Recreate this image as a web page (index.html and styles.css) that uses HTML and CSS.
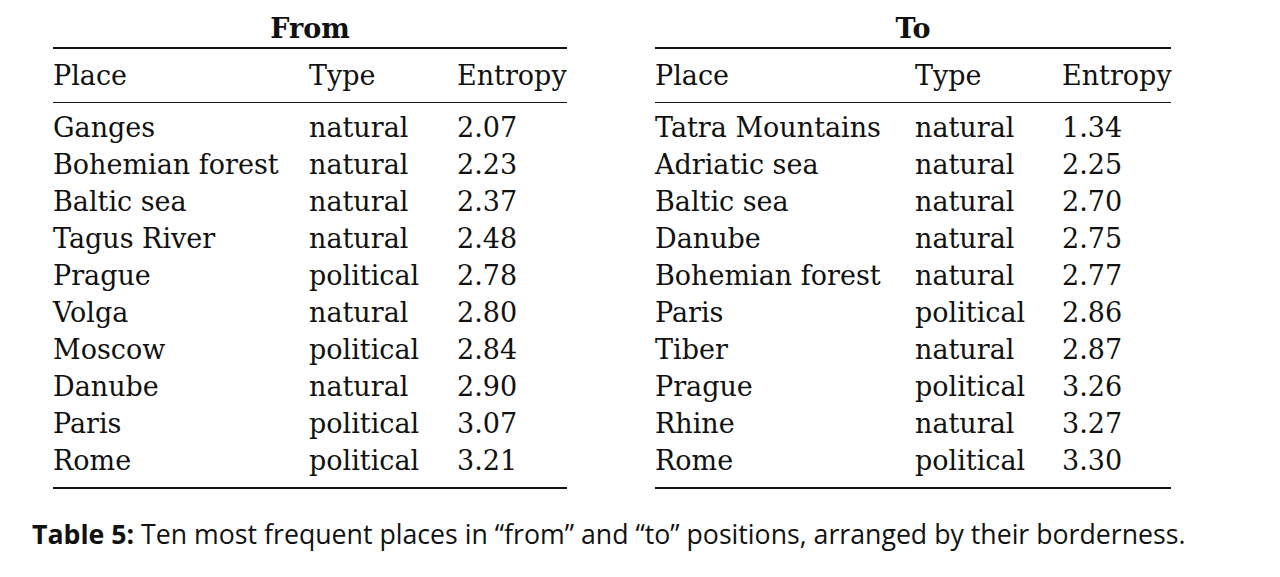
FILE: index.html
```html
<!DOCTYPE html>
<html>
<head>
<meta charset="utf-8">
<link rel="stylesheet" href="styles.css">
</head>
<body>
<div class="page">
  <div class="tables">
    <div class="tbl from">
      <div class="title">From</div>
      <div class="head">
        <span>Place</span><span>Type</span><span>Entropy</span>
      </div>
      <div class="body">
        <span>Ganges</span><span>natural</span><span>2.07</span>
        <span>Bohemian forest</span><span>natural</span><span>2.23</span>
        <span>Baltic sea</span><span>natural</span><span>2.37</span>
        <span>Tagus River</span><span>natural</span><span>2.48</span>
        <span>Prague</span><span>political</span><span>2.78</span>
        <span>Volga</span><span>natural</span><span>2.80</span>
        <span>Moscow</span><span>political</span><span>2.84</span>
        <span>Danube</span><span>natural</span><span>2.90</span>
        <span>Paris</span><span>political</span><span>3.07</span>
        <span>Rome</span><span>political</span><span>3.21</span>
      </div>
    </div>
    <div class="tbl to">
      <div class="title">To</div>
      <div class="head">
        <span>Place</span><span>Type</span><span>Entropy</span>
      </div>
      <div class="body">
        <span>Tatra Mountains</span><span>natural</span><span>1.34</span>
        <span>Adriatic sea</span><span>natural</span><span>2.25</span>
        <span>Baltic sea</span><span>natural</span><span>2.70</span>
        <span>Danube</span><span>natural</span><span>2.75</span>
        <span>Bohemian forest</span><span>natural</span><span>2.77</span>
        <span>Paris</span><span>political</span><span>2.86</span>
        <span>Tiber</span><span>natural</span><span>2.87</span>
        <span>Prague</span><span>political</span><span>3.26</span>
        <span>Rhine</span><span>natural</span><span>3.27</span>
        <span>Rome</span><span>political</span><span>3.30</span>
      </div>
    </div>
  </div>
  <p class="caption"><b>Table 5:</b> Ten most frequent places in “from” and “to” positions, arranged by their borderness.</p>
</div>
</body>
</html>
```

FILE: styles.css
```css
html, body {
  margin: 0;
  background: #ffffff;
  color: #111111;
}

.page {
  width: 1280px;
  height: 577px;
  padding-top: 10px;
  box-sizing: border-box;
}

.tables {
  display: flex;
  gap: 88px;
  padding-left: 53px;
  font-family: "DejaVu Serif", "Liberation Serif", serif;
  font-size: 27px;
  line-height: 37px;
}

.tbl.from { width: 514px; }
.tbl.to { width: 516px; }

.title {
  text-align: center;
  font-weight: bold;
  border-bottom: 2px solid #111;
}

.head,
.body {
  display: grid;
  white-space: nowrap;
}

.from .head, .from .body { grid-template-columns: 256px 148px 110px; }
.to .head, .to .body { grid-template-columns: 260px 147px 109px; }

.head {
  padding: 8px 0 8px;
  border-bottom: 1px solid #111;
}

.body {
  padding: 6px 0 8px;
  border-bottom: 2px solid #111;
}

.caption {
  margin: 28px 0 0;
  padding-left: 32px;
  font-family: "Open Sans", "Noto Sans", sans-serif;
  font-size: 26.7px;
  line-height: 34px;
  color: #111;
  white-space: nowrap;
}

.caption b {
  font-weight: 700;
}
```
